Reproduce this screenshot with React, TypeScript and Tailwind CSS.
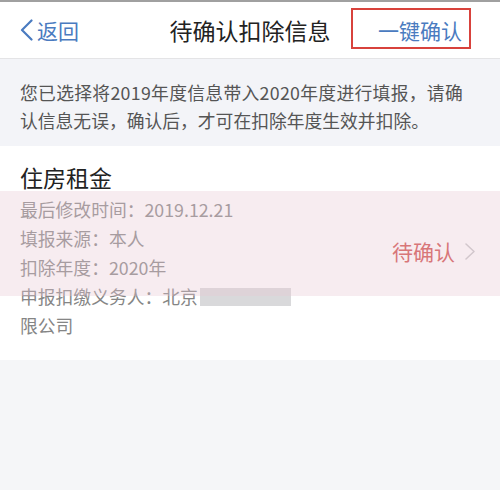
const details = [
  '最后修改时间：2019.12.21',
  '填报来源：本人',
  '扣除年度：2020年',
];

export default function App() {
  return (
    <div
      className="relative w-[500px] h-[490px] overflow-hidden bg-[#f5f6f8]"
      style={{ fontFamily: '"Noto Sans CJK SC", "Noto Sans", sans-serif' }}
    >
      {/* status bar edge */}
      <div className="h-[2px] bg-[#a0a0a0]" />

      {/* Nav bar */}
      <div className="relative flex h-[57px] items-center justify-between bg-white border-b border-[#e4e4e6] pl-[20px] pr-[38px]">
        <div className="flex items-center text-[#4a7bc0]">
          <svg width="13" height="22" viewBox="0 0 13 22" fill="none" className="mr-[4px]">
            <polyline points="11.5,1.5 2,11 11.5,20.5" stroke="currentColor" strokeWidth="2.2" strokeLinecap="round" strokeLinejoin="round" />
          </svg>
          <span className="text-[21px] leading-none">返回</span>
        </div>
        <h1 className="absolute left-1/2 -translate-x-1/2 text-[23px] leading-none text-[#222]">
          待确认扣除信息
        </h1>
        <div className="relative text-[21px] leading-none text-[#4a7bc0]">
          一键确认
          <div className="absolute -left-[27px] -right-[9px] -top-[12px] -bottom-[8px] border-[2px] border-[#d8423c]" />
        </div>
      </div>

      {/* Notice */}
      <div className="bg-[#f3f4f8] px-5 pt-[19px] pb-[12px] text-[17.8px] leading-[28px] text-[#555]">
        <p className="tracking-[0.3px]">您已选择将2019年度信息带入2020年度进行填报，请确</p>
        <p>认信息无误，确认后，才可在扣除年度生效并扣除。</p>
      </div>

      {/* Card */}
      <div className="relative flex items-center bg-white pl-5 pr-[25px] pt-[16px] pb-[20px]">
        <div className="flex-1">
          <h2 className="text-[23px] leading-[30px] text-[#222] mb-[3px]">住房租金</h2>
          <div className="text-[17.8px] leading-[29px] text-[#858585]">
            {details.map((line) => (
              <p key={line}>{line}</p>
            ))}
            <p className="flex items-center">
              申报扣缴义务人：北京
              <span className="ml-[2px] inline-block w-[91px] h-[18px] bg-[#d9d9db]" />
            </p>
            <p>限公司</p>
          </div>
        </div>
        <div className="flex items-center text-[21px] leading-none text-[#cf4a48]">
          待确认
          <svg width="10" height="17" viewBox="0 0 10 17" fill="none" className="ml-[10px] text-[#c6c6c8]">
            <polyline points="1,1 9,8.5 1,16" stroke="currentColor" strokeWidth="1.5" strokeLinecap="round" strokeLinejoin="round" />
          </svg>
        </div>

        {/* pink watermark band */}
        <div className="pointer-events-none absolute left-0 right-0 top-[45px] h-[105px] bg-[#e9c9d3]/35" />
      </div>
    </div>
  );
}
